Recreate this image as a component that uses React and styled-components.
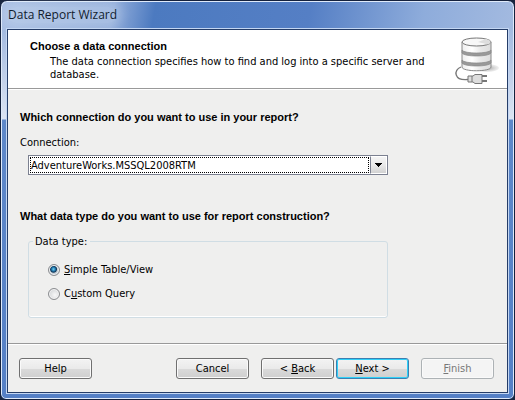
import React, { useState } from "react";
import styled, { createGlobalStyle, css } from "styled-components";

const uiFont = '"DejaVu Sans Condensed", "DejaVu Sans", "Noto Sans", sans-serif';

const GlobalStyle = createGlobalStyle`
  * { box-sizing: border-box; }
  body {
    margin: 0;
    background: #17243d;
    color: #000;
    font: 11px/13px ${uiFont};
  }
`;

const WindowFrame = styled.main`
  display: flex;
  flex-direction: column;
  min-height: 100vh;
  padding: 0 6px 6px;
  border: 1px solid #14213d;
  border-radius: 7px 7px 6px 6px;
  background:
    linear-gradient(100deg, #a9bfe3 0, #93aedb 22%, #4c7ac0 30%, #557fc5 60%, #8eacdb 82%, #a3bae0 100%) top / 100% 29px no-repeat,
    linear-gradient(#a3bae0 29px, #dce4f2 118px, #5e88c9 119px, #5580c6 100%);
  box-shadow: inset 0 0 0 1px #dfeafa;
`;

const TitleBar = styled.header`
  display: flex;
  align-items: center;
  height: 28px;
  padding: 0 1px;
`;

const Title = styled.h1`
  margin: 0;
  border-radius: 8px;
  background: rgba(225, 234, 248, 0.25);
  box-shadow: 0 0 10px 5px rgba(225, 234, 248, 0.25);
  color: #111c2e;
  font: 12px/16px "Open Sans", "Noto Sans", sans-serif;
`;

const Client = styled.form`
  display: flex;
  flex: 1;
  flex-direction: column;
  border: 1px solid #253d68;
  outline: 1px solid #c4d7f3;
  background: #efefee;
`;

const Banner = styled.section`
  display: flex;
  justify-content: space-between;
  height: 59px;
  padding: 10px 7px 0 22px;
  border-bottom: 1px solid #999;
  box-shadow: 0 1px #fff;
  background: #fff;
`;

const Heading = styled.h2`
  margin: 0;
  font: bold 11px/13px "Liberation Sans", Arial, sans-serif;
`;

const BannerText = styled.p`
  max-width: 388px;
  margin: 2px 0 0 20px;
`;

const DatabaseIcon = styled.svg`
  flex: none;
  width: 46px;
  height: 50px;
  margin-top: -4px;
`;

const Content = styled.section`
  flex: 1;
  padding: 22px 12px 0;
`;

const FieldLabel = styled.label`
  display: block;
  margin-top: 12px;
`;

const SelectBox = styled.div`
  display: grid;
  grid-template-columns: 1fr 17px;
  max-width: 360px;
  height: 20px;
  margin: 6px 0 35px 8px;
  border: 1px solid #7b8090;
  background: #fff;
`;

const Select = styled.select`
  grid-area: 1 / 1 / 2 / 3;
  width: 100%;
  padding: 0 18px 0 2px;
  border: 0;
  outline: 0;
  appearance: none;
  background: transparent;
  color: #000;
  font: 11px/13px ${uiFont};
`;

const FocusRing = styled.span`
  grid-area: 1 / 1;
  margin: 1px;
  border: 1px dotted #000;
  pointer-events: none;
`;

const SelectArrow = styled.span`
  grid-area: 1 / 2;
  display: grid;
  place-items: center;
  border: 1px solid #fff;
  border-left: 1px solid #7b8090;
  background: linear-gradient(#f4f4f4, #e9e9e9 50%, #d2d2d2);
  pointer-events: none;
`;

const Group = styled.fieldset`
  display: flex;
  flex-direction: column;
  gap: 11px;
  max-width: 360px;
  height: 83px;
  margin: 12px 0 0 8px;
  padding: 15px 19px 0;
  border: 1px solid #d0dde4;
  border-radius: 3px;
  box-shadow: inset 0 -1px #fff;
`;

const Legend = styled.legend`
  margin-left: -15px;
  padding: 0 3px 0 2px;
`;

const Option = styled.label`
  display: flex;
  align-items: center;
  gap: 4px;
`;

const Radio = styled.input`
  width: 12px;
  height: 12px;
  margin: 0;
  border: 1px solid #8b8d90;
  border-radius: 50%;
  appearance: none;
  background: radial-gradient(circle at 60% 60%, #f8f8f8, #c8cbce);
  box-shadow: inset 0 0 0 1px #f4f4f4;

  &:checked {
    background: radial-gradient(circle at 45% 42%, #79d5f4 0, #1b72a8 2px, #123757 3px, #c4cdd5 4px);
  }
`;

const Footer = styled.footer`
  display: flex;
  align-items: center;
  height: 49px;
  padding: 1px 13px 0 11px;
  border-top: 1px solid #999;
  box-shadow: inset 0 1px #fff;
`;

const NavButtons = styled.div`
  display: flex;
  margin-left: auto;
`;

const Button = styled.button`
  width: 73px;
  height: 21px;
  margin-left: ${({ $gap = 0 }) => $gap}px;
  padding: 0;
  border: 1px solid #707070;
  border-radius: 3px;
  background: linear-gradient(#f3f3f3, #eaeaea 50%, #dadada 51%, #cfcfcf);
  box-shadow: inset 0 0 0 1px #fafafa;
  color: #000;
  font: 11px/13px ${uiFont};

  ${({ $primary }) => $primary && css`
    border-color: #3c7fb1;
    box-shadow: inset 0 0 0 1px #2fd0f8;
  `}

  &:disabled {
    border-color: #adb2b5;
    background: #f4f4f4;
    color: #777;
  }
`;

function DatabasePlug() {
  return (
    <DatabaseIcon viewBox="0 0 46 50" aria-hidden="true">
      <defs>
        <linearGradient id="disk" x2="1">
          <stop stopColor="#eee" />
          <stop offset=".35" stopColor="#fff" />
          <stop offset=".65" stopColor="#e8e8e8" />
          <stop offset="1" stopColor="#ddd" />
        </linearGradient>
        <radialGradient id="shadow">
          <stop stopColor="#999" />
          <stop offset="1" stopColor="#ccc" stopOpacity=".3" />
        </radialGradient>
      </defs>
      <ellipse cx="33" cy="32" rx="12" ry="4" fill="url(#shadow)" />
      <path d="M8 6V31C8 36 37 36 37 31V6" fill="url(#disk)" stroke="#888" />
      <path d="M8 14C10 18 35 18 37 14V17C35 21 10 21 8 17ZM8 24C10 28 35 28 37 24V27C35 31 10 31 8 27Z" fill="#999" stroke="#888" strokeWidth=".7" />
      <ellipse cx="22.5" cy="6" rx="14.5" ry="4" fill="#f7f7f7" stroke="#777" />
      <path d="M24 6L32 3C37 4 38 7 34 8.500Z" fill="#ddd" />
      <path d="M7 31C-1 34 0 45 14 43.500" fill="none" stroke="#777" strokeWidth="1.300" />
      <path d="M14 40H19L21 38.500H28V47.500H21L19 46H14ZM18 40V46" fill="#ddd" stroke="#777" />
      <path d="M28 40H33M28 45H33" stroke="#777" strokeWidth="2" />
    </DatabaseIcon>
  );
}

export default function App() {
  const [dataType, setDataType] = useState("table");
  return (
    <>
      <GlobalStyle />
      <WindowFrame>
        <TitleBar><Title>Data Report Wizard</Title></TitleBar>
        <Client onSubmit={(event) => event.preventDefault()}>
          <Banner>
            <div>
              <Heading>Choose a data connection</Heading>
              <BannerText>The data connection specifies how to find and log into a specific server and database.</BannerText>
            </div>
            <DatabasePlug />
          </Banner>
          <Content>
            <Heading>Which connection do you want to use in your report?</Heading>
            <FieldLabel htmlFor="connection">Connection:</FieldLabel>
            <SelectBox>
              <Select id="connection">
                <option>AdventureWorks.MSSQL2008RTM</option>
              </Select>
              <FocusRing />
              <SelectArrow>
                <svg width="7" height="4" viewBox="0 0 7 4" shapeRendering="crispEdges" aria-hidden="true">
                  <path d="M0 0H7L3.500 4Z" />
                </svg>
              </SelectArrow>
            </SelectBox>
            <Heading>What data type do you want to use for report construction?</Heading>
            <Group>
              <Legend>Data type:</Legend>
              <Option>
                <Radio type="radio" name="type" checked={dataType === "table"} onChange={() => setDataType("table")} />
                <span><u>S</u>imple Table/View</span>
              </Option>
              <Option>
                <Radio type="radio" name="type" checked={dataType === "query"} onChange={() => setDataType("query")} />
                <span>C<u>u</u>stom Query</span>
              </Option>
            </Group>
          </Content>
          <Footer>
            <Button type="button">Help</Button>
            <NavButtons>
              <Button type="button">Cancel</Button>
              <Button type="button" $gap={12}>&lt; <u>B</u>ack</Button>
              <Button type="submit" $gap={2} $primary><u>N</u>ext &gt;</Button>
              <Button type="button" $gap={12} disabled><u>F</u>inish</Button>
            </NavButtons>
          </Footer>
        </Client>
      </WindowFrame>
    </>
  );
}
